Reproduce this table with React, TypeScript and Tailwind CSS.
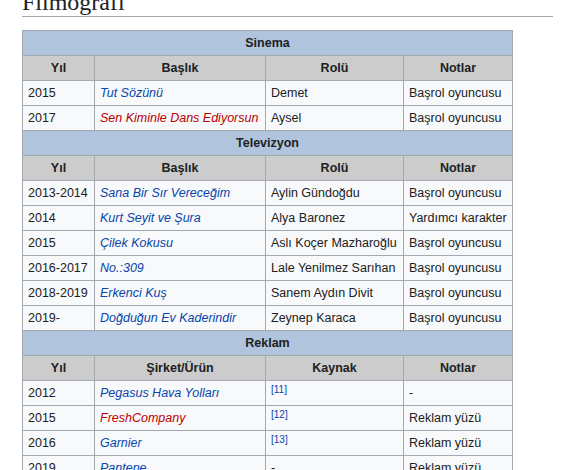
import React from 'react';

type Cell = { text: string; link?: 'blue' | 'red'; ref?: string };
type Row = [string, Cell, Cell, Cell];

interface Section {
    title: string;
    headers: [string, string, string, string];
    rows: Row[];
}

const t = (text: string): Cell => ({ text });
const blue = (text: string): Cell => ({ text, link: 'blue' });
const red = (text: string): Cell => ({ text, link: 'red' });
const ref = (n: string): Cell => ({ text: '', ref: n });

const sections: Section[] = [
    {
        title: 'Sinema',
        headers: ['Yıl', 'Başlık', 'Rolü', 'Notlar'],
        rows: [
            ['2015', blue('Tut Sözünü'), t('Demet'), t('Başrol oyuncusu')],
            ['2017', red('Sen Kiminle Dans Ediyorsun'), t('Aysel'), t('Başrol oyuncusu')],
        ],
    },
    {
        title: 'Televizyon',
        headers: ['Yıl', 'Başlık', 'Rolü', 'Notlar'],
        rows: [
            ['2013-2014', blue('Sana Bir Sır Vereceğim'), t('Aylin Gündoğdu'), t('Başrol oyuncusu')],
            ['2014', blue('Kurt Seyit ve Şura'), t('Alya Baronez'), t('Yardımcı karakter')],
            ['2015', blue('Çilek Kokusu'), t('Aslı Koçer Mazharoğlu'), t('Başrol oyuncusu')],
            ['2016-2017', blue('No.:309'), t('Lale Yenilmez Sarıhan'), t('Başrol oyuncusu')],
            ['2018-2019', blue('Erkenci Kuş'), t('Sanem Aydın Divit'), t('Başrol oyuncusu')],
            ['2019-', blue('Doğduğun Ev Kaderindir'), t('Zeynep Karaca'), t('Başrol oyuncusu')],
        ],
    },
    {
        title: 'Reklam',
        headers: ['Yıl', 'Şirket/Ürün', 'Kaynak', 'Notlar'],
        rows: [
            ['2012', blue('Pegasus Hava Yolları'), ref('11'), t('-')],
            ['2015', red('FreshCompany'), ref('12'), t('Reklam yüzü')],
            ['2016', blue('Garnier'), ref('13'), t('Reklam yüzü')],
            ['2019', blue('Pantene'), t('-'), t('Reklam yüzü')],
        ],
    },
];

const CellContent: React.FC<{ cell: Cell }> = ({ cell }) => {
    if (cell.ref) {
        return <sup className="align-top text-[10px] leading-[12px] text-[#0645ad] relative top-[1px]">[{cell.ref}]</sup>;
    }
    if (cell.link === 'blue') return <a className="italic text-[#0645ad]">{cell.text}</a>;
    if (cell.link === 'red') return <a className="italic text-[#ba0000]">{cell.text}</a>;
    return <>{cell.text}</>;
};

const td = 'border border-[#a2a9b1] px-[5px] py-[2px] whitespace-nowrap overflow-hidden';

const App: React.FC = () => {
    return (
        <div className="min-h-[470px] bg-white text-[#202122] pl-[22px] w-[553px] font-['Liberation_Sans',Arial,sans-serif] overflow-hidden">
            <h2 className="mt-[-10px] pb-[2px] border-b border-[#a2a9b1] font-['Liberation_Serif','Times_New_Roman',serif] text-[24px] leading-[24px]">
                Filmografi
            </h2>
            <table className="mt-[13px] table-fixed border-collapse w-[490px] text-[12.5px] leading-[20px] bg-[#f8f9fa]">
                <colgroup>
                    <col className="w-[72px]" />
                    <col className="w-[171px]" />
                    <col className="w-[138px]" />
                    <col className="w-[109px]" />
                </colgroup>
                <tbody>
                    {sections.map(section => (
                        <React.Fragment key={section.title}>
                            <tr>
                                <th colSpan={4} className={`${td} bg-[#b0c4de] font-bold text-center`}>
                                    {section.title}
                                </th>
                            </tr>
                            <tr>
                                {section.headers.map(h => (
                                    <th key={h} className={`${td} bg-[#cccccc] font-bold text-center`}>{h}</th>
                                ))}
                            </tr>
                            {section.rows.map((row, i) => (
                                <tr key={i}>
                                    <td className={td}>{row[0]}</td>
                                    <td className={td}><CellContent cell={row[1]} /></td>
                                    <td className={`${td} ${row[2].ref ? 'align-top' : ''}`}><CellContent cell={row[2]} /></td>
                                    <td className={td}><CellContent cell={row[3]} /></td>
                                </tr>
                            ))}
                        </React.Fragment>
                    ))}
                </tbody>
            </table>
        </div>
    );
};

export default App;
